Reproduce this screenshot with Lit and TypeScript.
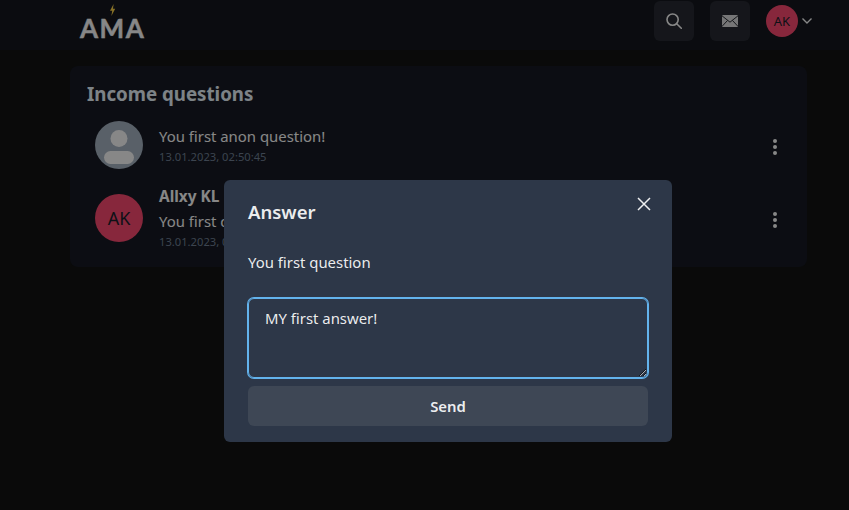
import { LitElement, html, css, svg } from "lit";
import { customElement } from "lit/decorators.js";

const dots = svg`<svg width="4" height="16" viewBox="0 0 4 16"><circle cx="2" cy="2" r="2" fill="currentColor"/><circle cx="2" cy="8" r="2" fill="currentColor"/><circle cx="2" cy="14" r="2" fill="currentColor"/></svg>`;

@customElement("app-root")
export class AppRoot extends LitElement {
  static styles = css`
    :host { display: block; width: 849px; height: 510px; position: relative; overflow: hidden; background: #131313;
      font-family: "Noto Sans", "Open Sans", sans-serif; color: #fff; font-size: 14.9px; line-height: 24px; }
    .page { height: 510px; display: flex; flex-direction: column; }
    .nav { height: 50px; flex: none; background: #15181f; display: flex; align-items: flex-start; justify-content: space-between; padding: 0 36px 0 80px; box-sizing: border-box; }
    .logo { width: 66px; position: relative; }
    .logo svg { position: absolute; top: 4px; left: 29px; display: block; }
    .logo span { display: block; font-size: 26px; line-height: 26px; font-weight: 700; letter-spacing: 1.5px; margin-top: 15px; color: #fff; font-family: "Lato", sans-serif; -webkit-text-stroke: .4px #fff; }
    .tools { display: flex; align-items: center; height: 42px; }
    .tool { width: 40px; height: 40px; border-radius: 6px; background: #282b33; display: flex; align-items: center; justify-content: center; margin-right: 16px; color: #fff; }
    .me { display: flex; align-items: center; gap: 3px; }
    .av-sm { width: 32px; height: 32px; border-radius: 50%; background: #ff4b71; color: #1a202c; font-size: 13px; display: flex; align-items: center; justify-content: center; }
    .content { padding: 16px 42px 0 70px; }
    .card { background: #171a24; border-radius: 8px; height: 201px; padding: 16px 17px; box-sizing: border-box; }
    h2 { margin: 0; font-size: 18.7px; line-height: 24px; font-weight: 700; color: #edf7ff; }
    .rows { display: flex; flex-direction: column; gap: 7px; padding: 6px 8px; }
    .row { display: flex; align-items: center; height: 66px; }
    .avatar { width: 48px; height: 48px; border-radius: 50%; flex: none; display: flex; align-items: center; justify-content: center; margin-right: 16px; overflow: hidden; }
    .avatar svg { display: block; }
    .avatar.anon { background: #a8b5c4; }
    .avatar.red { background: #ff4b71; color: #1a202c; font-size: 18px; }
    .body { flex: 1; }
    .name { font-weight: 700; font-size: 15.4px; color: #fff; line-height: 24px; }
    .q { line-height: 24px; color: #fff; }
    .date { font-size: 11.2px; line-height: 18px; color: #718096; }
    .menu { width: 4px; height: 16px; color: #fff; margin: 4px 5px 0 0; flex: none; }
    .menu svg { display: block; }
    .overlay { position: absolute; inset: 0; background: rgba(0,0,0,.47); }
    .modal { position: absolute; left: 224px; top: 180px; width: 448px; height: 262px; background: #2d3748; border-radius: 6px; box-sizing: border-box; display: flex; flex-direction: column; padding: 17px 24px 16px; }
    .modal h3 { margin: 0; font-size: 18.5px; line-height: 30px; font-weight: 600; color: rgba(255,255,255,.92); }
    .close { position: absolute; top: 17px; right: 21px; width: 14px; height: 14px; display: block; color: rgba(255,255,255,.92); }
    .mq { margin-top: 23px; color: rgba(255,255,255,.92); }
    textarea { display: block; box-sizing: border-box; width: 400px; height: 80px; margin-top: 24px; padding: 7px 16px; background: transparent; border: 1px solid #63b3ed; box-shadow: 0 0 0 1px #63b3ed; outline: none; border-radius: 6px; font: inherit; color: rgba(255,255,255,.92); resize: vertical; }
    button { display: block; width: 400px; height: 40px; margin-top: 8px; border: 0; border-radius: 6px; background: #3e4755; color: rgba(255,255,255,.92); font: 600 14.9px/24px "Noto Sans", "Open Sans", sans-serif; }
  `;

  render() {
    return html`
      <div class="page">
        <div class="nav">
          <div class="logo">
            <svg width="7" height="12" viewBox="0 0 7 12"><path d="M4.6 0 1 6.8h2.2L2.4 12l3.8-7.2H4z" fill="#ffd54a"/></svg>
            <span>AMA</span>
          </div>
          <div class="tools">
            <div class="tool"><svg width="16" height="16" viewBox="0 0 16 16" fill="none" stroke="currentColor" stroke-width="1.6"><circle cx="6.6" cy="6.6" r="5.6"/><path d="m10.7 10.7 4.6 4.6" stroke-linecap="round"/></svg></div>
            <div class="tool"><svg width="16" height="12" viewBox="0 0 16 12"><rect width="16" height="12" rx="1" fill="currentColor" opacity=".85"/><path d="M0 .8 8 7.2 16 .8M0 11.4 5.6 5.4M16 11.4 10.4 5.4" fill="none" stroke="#282b33" stroke-width="1"/></svg></div>
            <div class="me">
              <div class="av-sm">AK</div>
              <svg width="12" height="8" viewBox="0 0 12 8" fill="none" stroke="#fff" stroke-width="1.4"><path d="m1.5 1.5 4.5 4.5 4.5-4.5"/></svg>
            </div>
          </div>
        </div>
        <div class="content">
          <div class="card">
            <h2>Income questions</h2>
            <div class="rows">
              <div class="row">
                <div class="avatar anon"><svg width="48" height="48" viewBox="0 0 48 48" fill="#fff"><circle cx="24" cy="17.5" r="8.5"/><rect x="9" y="30" width="30" height="13" rx="6.5"/></svg></div>
                <div class="body"><div class="q">You first anon question!</div><div class="date">13.01.2023, 02:50:45</div></div>
                <div class="menu">${dots}</div>
              </div>
              <div class="row">
                <div class="avatar red">AK</div>
                <div class="body"><div class="name">Allxy KL</div><div class="q">You first question</div><div class="date">13.01.2023, 02:50:45</div></div>
                <div class="menu">${dots}</div>
              </div>
            </div>
          </div>
        </div>
      </div>
      <div class="overlay"></div>
      <div class="modal">
        <h3>Answer</h3>
        <svg class="close" viewBox="0 0 14 14" fill="none" stroke="currentColor" stroke-width="1.5"><path d="m1 1 12 12M13 1 1 13"/></svg>
        <div class="mq">You first question</div>
        <textarea .value=${"MY first answer!"}></textarea>
        <button>Send</button>
      </div>
    `;
  }
}
